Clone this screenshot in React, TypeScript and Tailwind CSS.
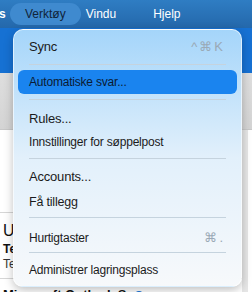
import React from "react";

type Item =
  | { kind: "item"; label: string; h: string; size: string; shortcut?: string; active?: boolean; mt: string }
  | { kind: "sep"; mt: string };

const ITEMS: Item[] = [
  { kind: "item", label: "Sync", h: "h-[24px]", size: "text-[13px]", shortcut: "^⌘K", mt: "mt-[5px]" },
  { kind: "sep", mt: "mt-[5px]" },
  { kind: "item", label: "Automatiske svar...", h: "h-[24px]", size: "text-[12px]", active: true, mt: "mt-[5px]" },
  { kind: "sep", mt: "mt-[5px]" },
  { kind: "item", label: "Rules...", h: "h-[22px]", size: "text-[13px]", mt: "mt-[8px]" },
  { kind: "item", label: "Innstillinger for søppelpost", h: "h-[23px]", size: "text-[12px]", mt: "mt-0" },
  { kind: "sep", mt: "mt-[5px]" },
  { kind: "item", label: "Accounts...", h: "h-[25px]", size: "text-[13px]", mt: "mt-[5px]" },
  { kind: "item", label: "Få tillegg", h: "h-[26px]", size: "text-[12.5px]", mt: "mt-0" },
  { kind: "sep", mt: "mt-[2px]" },
  { kind: "item", label: "Hurtigtaster", h: "h-[25px]", size: "text-[12px]", shortcut: "⌘.", mt: "mt-[7px]" },
  { kind: "sep", mt: "mt-[2px]" },
  { kind: "item", label: "Administrer lagringsplass", h: "h-[24px]", size: "text-[12px]", mt: "mt-[5px]" },
];

export default function App() {
  return (
    <div
      className="relative w-[252px] h-[292px] overflow-hidden bg-white"
      style={{ fontFamily: '"Liberation Sans", Arial, sans-serif' }}
    >
      {/* menu bar */}
      <div className="h-[28px] flex items-center bg-gradient-to-b from-[#2f7dc3] to-[#2468ab] text-[12px] text-white">
        <span className="font-bold -ml-[1px] w-[11px]">s</span>
        <span className="h-[22px] px-[15px] flex items-center rounded-full bg-[#3f8acf] text-[#10243a]">Verktøy</span>
        <span className="ml-[5px]">Vindu</span>
        <span className="ml-[37px]">Hjelp</span>
      </div>
      {/* ribbon band */}
      <div className="h-[45px] bg-[#1671d3]" />
      {/* toolbar */}
      <div className="h-[57px] bg-gradient-to-b from-[#dedede] to-[#d4d4d4] border-b border-[#c8c8c8]" />
      {/* message list */}
      <div className="flex">
        <div className="flex-1 flex flex-col text-[#111]">
          <div className="h-[82px]" />
          <div className="h-px bg-[#d6d6d6]" />
          <div className="pl-[3px] pt-[9px] text-[16px] leading-[18px]">U</div>
          <div className="pl-[3px] pt-[1px] text-[12px] leading-[16px] font-bold">Te</div>
          <div className="pl-[3px] text-[12px] leading-[14px] text-[#333]">Te</div>
          <div className="mt-[7px] h-px bg-[#d6d6d6]" />
          <div className="flex items-center pl-[3px] pt-[9px] text-[13px] font-bold leading-[14px]">
            Microsoft Outlook S
            <span className="ml-[8px] w-[8px] h-[8px] rounded-full bg-[#1a73d8]" />
          </div>
        </div>
        <div className="w-[6px] mr-[4px] bg-[#e6e6e6]" />
      </div>

      {/* dropdown */}
      <div className="absolute left-[13px] top-[29px] w-[229px] pb-[4px] rounded-[10px] border border-white/60 shadow-[0_3px_10px_rgba(0,0,0,0.25)] bg-gradient-to-b from-[#a4d5fa] via-[#e2f0fb] to-[#f7f9fb] flex flex-col">
        {ITEMS.map((it, i) =>
          it.kind === "sep" ? (
            <div key={i} className={`${it.mt} mx-[15px] h-px bg-[#c5d3de]`} />
          ) : (
            <div
              key={i}
              className={`${it.mt} ${it.h} mx-[4px] pl-[11px] pr-[12px] flex items-center justify-between rounded-[6px] ${it.size} ${
                it.active ? "bg-[#1a84ef] text-[#0b1b33]" : "text-[#1b1b1b]"
              }`}
            >
              <span className="tracking-[-0.2px]">{it.label}</span>
              {it.shortcut && <span className="text-[#9aa9b6] text-[13px] tracking-[2px]">{it.shortcut}</span>}
            </div>
          )
        )}
      </div>
    </div>
  );
}
